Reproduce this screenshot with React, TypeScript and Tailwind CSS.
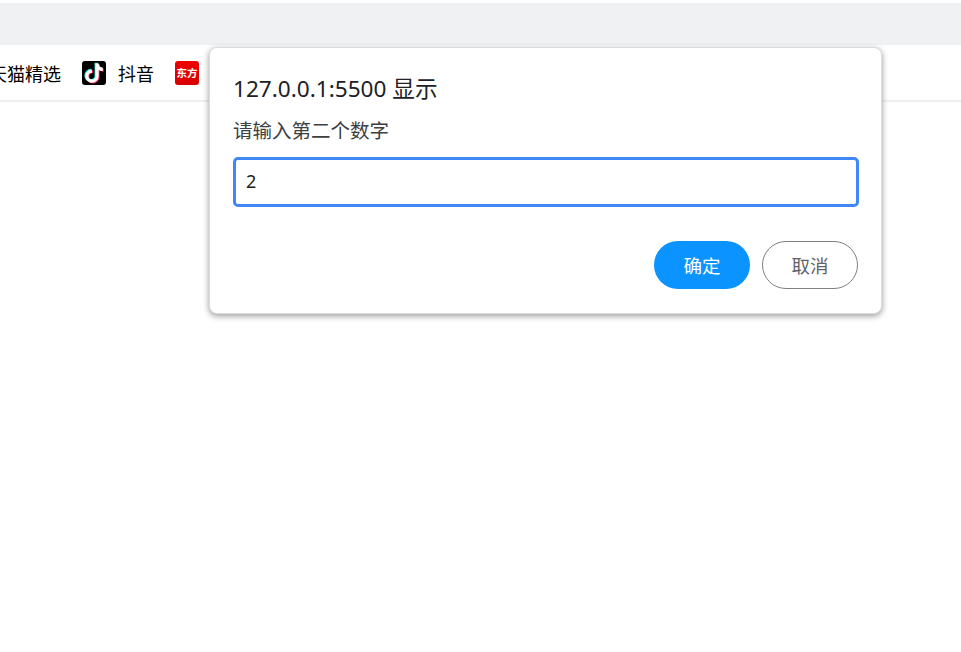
import React from 'react';

const CJK = "font-['Noto_Sans','Noto_Sans_CJK_SC',sans-serif]";

function TikTokIcon() {
  const d = "M13.2 4v10.6a2.9 2.9 0 1 1-2.9-2.9V9a5.6 5.6 0 1 0 5.6 5.6V9.2c1 .8 2.2 1.2 3.4 1.2V7.7c-2 0-3.4-1.6-3.4-3.7z";
  return (
    <div className="w-6 h-6 rounded-[3px] bg-black shrink-0">
      <svg viewBox="2 2 20 20" className="w-6 h-6">
        <path d={d} fill="#25f4ee" transform="translate(-0.7 -0.5)" />
        <path d={d} fill="#fe2c55" transform="translate(0.7 0.5)" />
        <path d={d} fill="#fff" />
      </svg>
    </div>
  );
}

export default function App() {
  return (
    <div className={`relative w-[961px] h-[652px] overflow-hidden bg-white ${CJK}`}>
      <div className="mt-[3px] h-[42px] bg-[#f0f1f3]" />
      <div className="h-[57px] border-b-2 border-b-[#f0f0f0] flex items-center pt-[1px] whitespace-nowrap text-[18px] text-black">
        <span className="ml-[-11px] w-[72px] pt-[3px]">天猫精选</span>
        <div className="ml-[21px]"><TikTokIcon /></div>
        <span className="ml-[12px] w-[36px] pt-[3px]">抖音</span>
        <div className="ml-[21px] w-6 h-6 rounded-[3px] bg-gradient-to-b from-[#f00000] to-[#d80000] flex items-center justify-center shrink-0">
          <span className="text-[10.5px] leading-none font-semibold text-white">东方</span>
        </div>
      </div>

      <div className="absolute left-[209px] top-[47px] w-[673px] h-[267px] bg-white rounded-[8px] border border-[#dcdcdc] shadow-[0_2px_6px_rgba(0,0,0,0.4)] pl-[24px] pr-[23px] pt-[25px] flex flex-col">
        <div className="text-[22.6px] leading-[32px] text-[#202124] ml-[-1px]">127.0.0.1:5500 显示</div>
        <div className="mt-[14px] text-[19.5px] leading-[24px] text-[#3c4043] ml-[-1px]">请输入第二个数字</div>
        <input
          readOnly
          value="2"
          className="mt-[14px] ml-[-1px] w-[626px] h-[50px] rounded-[5px] border-[3px] border-[#3f87fb] px-[10px] pb-[2px] text-[18px] text-[#202124] outline-none"
        />
        <div className="mt-[34px] flex justify-end gap-[12px]">
          <button className="w-[96px] h-[48px] pt-[2px] rounded-full bg-[#0b93ff] text-white text-[18.5px]">确定</button>
          <button className="w-[96px] h-[48px] pt-[2px] rounded-full bg-white border border-[#808080] text-[#5f6368] text-[18.5px]">取消</button>
        </div>
      </div>
    </div>
  );
}
